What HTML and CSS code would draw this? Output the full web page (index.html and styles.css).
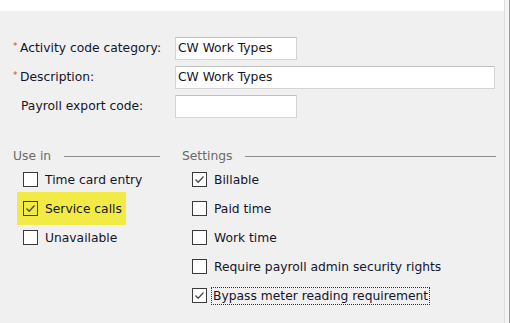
FILE: index.html
```html
<!DOCTYPE html>
<html>
<head>
<meta charset="utf-8">
<link rel="stylesheet" href="styles.css">
</head>
<body>
<div class="topbar"></div>
<div class="edge"></div>
<div class="panel">
  <div class="fields">
    <label class="lbl"><span class="req">*</span>Activity code category:</label>
    <div class="input short">CW Work Types</div>
    <label class="lbl"><span class="req">*</span>Description:</label>
    <div class="input long">CW Work Types</div>
    <label class="lbl plain">Payroll export code:</label>
    <div class="input short"></div>
  </div>
  <div class="groups">
    <div class="group left">
      <div class="ghead"><span class="gtitle">Use in</span><span class="gline"></span></div>
      <div class="item"><span class="box"></span><span class="txt">Time card entry</span></div>
      <div class="item hl"><span class="box checked"><svg viewBox="0 0 13 13"><polyline points="2.5,6.5 5.2,9.3 10.5,3.5"/></svg></span><span class="txt">Service calls</span></div>
      <div class="item"><span class="box"></span><span class="txt">Unavailable</span></div>
    </div>
    <div class="group right">
      <div class="ghead"><span class="gtitle">Settings</span><span class="gline"></span></div>
      <div class="item"><span class="box checked"><svg viewBox="0 0 13 13"><polyline points="2.5,6.5 5.2,9.3 10.5,3.5"/></svg></span><span class="txt">Billable</span></div>
      <div class="item"><span class="box"></span><span class="txt">Paid time</span></div>
      <div class="item"><span class="box"></span><span class="txt">Work time</span></div>
      <div class="item"><span class="box"></span><span class="txt">Require payroll admin security rights</span></div>
      <div class="item"><span class="box checked"><svg viewBox="0 0 13 13"><polyline points="2.5,6.5 5.2,9.3 10.5,3.5"/></svg></span><span class="txt focus">Bypass meter reading requirement</span></div>
    </div>
  </div>
</div>
</body>
</html>
```
FILE: styles.css
```css
html, body {
  margin: 0;
  padding: 0;
}
body {
  width: 510px;
  height: 323px;
  overflow: hidden;
  background: #f0f0f0;
  font-family: "DejaVu Sans", "Liberation Sans", sans-serif;
  font-size: 12.3px;
  color: #15152a;
  position: relative;
}
.topbar {
  height: 11px;
  background: #ffffff;
}
.edge {
  position: absolute;
  top: 0;
  right: 0;
  width: 5px;
  height: 323px;
  background: #f4f4f4;
  border-left: 1px solid #dcdcdc;
  box-shadow: inset -1px 0 0 #9a9a9a;
}
.panel {
  padding: 26px 0 0 13px;
}
.fields {
  display: grid;
  grid-template-columns: 162px auto;
  grid-auto-rows: 23px;
  row-gap: 6px;
  align-items: center;
}
.lbl {
  display: block;
  height: 23px;
  line-height: 23px;
  white-space: nowrap;
  overflow: visible;
}
.lbl.plain {
  padding-left: 8px;
}
.req {
  color: #e23b3b;
  font-size: 9px;
  line-height: 1;
  display: inline-block;
  width: 7px;
  vertical-align: 3px;
}
.input {
  height: 21px;
  line-height: 21px;
  background: #fff;
  border: 1px solid #d4d4d4;
  border-top-color: #c0c0c0;
  padding-left: 2px;
  white-space: nowrap;
}
.input.short {
  width: 118px;
}
.input.long {
  width: 316px;
}
.groups {
  display: flex;
  margin-top: 30px;
}
.group.left {
  width: 147px;
  margin-right: 22px;
}
.group.right {
  width: 314px;
}
.ghead {
  display: flex;
  align-items: center;
  height: 16px;
  margin-bottom: 1px;
}
.gtitle {
  color: #6a6a6a;
}
.gline {
  flex: 1;
  height: 1px;
  background: #8c8c8c;
  margin-left: 13px;
}
.item {
  display: flex;
  align-items: center;
  height: 29px;
  padding-left: 10px;
}
.item.hl {
  background: #f3eb45;
  width: fit-content;
  margin: -2px 0 -2px 4px;
  padding: 2px 4px 2px 6px;
}
.box {
  width: 13px;
  height: 13px;
  border: 1px solid #3a3a3a;
  background: #fff;
  margin-right: 7px;
  flex: none;
  display: flex;
}
.item.hl .box {
  background: transparent;
}
.box svg {
  width: 13px;
  height: 13px;
}
.box polyline {
  fill: none;
  stroke: #4a4a4a;
  stroke-width: 1.3;
}
.txt {
  white-space: nowrap;
}
.txt.focus {
  outline: 1px dotted #333;
  outline-offset: 1px;
  margin-left: -1px;
}
```
